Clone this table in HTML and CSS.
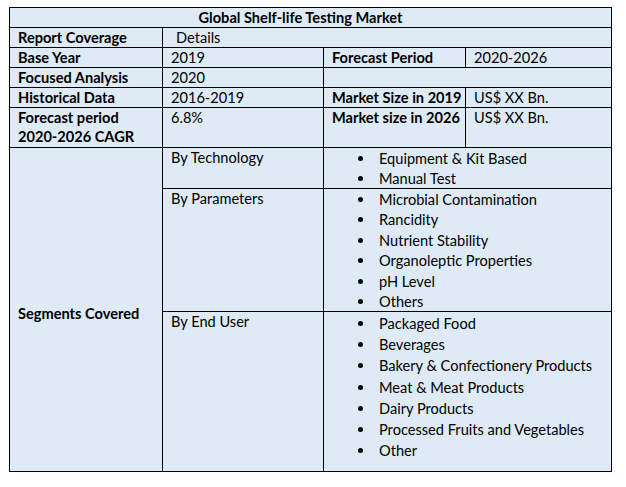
FILE: index.html
```html
<!DOCTYPE html>
<html lang="en">
<head>
<meta charset="utf-8">
<title>Global Shelf-life Testing Market</title>
<link rel="stylesheet" href="styles.css">
</head>
<body>
<table class="report">
  <colgroup>
    <col class="c1"><col class="c2"><col class="c3"><col class="c4">
  </colgroup>
  <tr class="r-title"><td colspan="4" class="title">Global Shelf-life Testing Market</td></tr>
  <tr class="r-std"><td class="lbl">Report Coverage</td><td colspan="3" class="details">Details</td></tr>
  <tr class="r-std"><td class="lbl">Base Year</td><td>2019</td><td class="lbl">Forecast Period</td><td>2020-2026</td></tr>
  <tr class="r-std"><td class="lbl">Focused Analysis</td><td>2020</td><td colspan="2"></td></tr>
  <tr class="r-std"><td class="lbl">Historical Data</td><td>2016-2019</td><td class="lbl">Market Size in 2019</td><td>US$ XX Bn.</td></tr>
  <tr class="r-two"><td class="lbl">Forecast period<br>2020-2026 CAGR</td><td>6.8%</td><td class="lbl">Market size in 2026</td><td>US$ XX Bn.</td></tr>
  <tr class="r-tech">
    <td rowspan="3" class="lbl seg">Segments Covered</td>
    <td>By Technology</td>
    <td colspan="2" class="list-cell">
      <ul class="bullets">
        <li>Equipment &amp; Kit Based</li>
        <li>Manual Test</li>
      </ul>
    </td>
  </tr>
  <tr class="r-param">
    <td>By Parameters</td>
    <td colspan="2" class="list-cell">
      <ul class="bullets">
        <li>Microbial Contamination</li>
        <li>Rancidity</li>
        <li>Nutrient Stability</li>
        <li>Organoleptic Properties</li>
        <li>pH Level</li>
        <li>Others</li>
      </ul>
    </td>
  </tr>
  <tr class="r-user">
    <td>By End User</td>
    <td colspan="2" class="list-cell">
      <ul class="bullets wide">
        <li>Packaged Food</li>
        <li>Beverages</li>
        <li>Bakery &amp; Confectionery Products</li>
        <li>Meat &amp; Meat Products</li>
        <li>Dairy Products</li>
        <li>Processed Fruits and Vegetables</li>
        <li>Other</li>
      </ul>
    </td>
  </tr>
</table>
</body>
</html>
```
FILE: styles.css
```css
html, body {
  margin: 0;
  padding: 0;
  background: #ffffff;
}
body {
  padding: 7px 0 0 9px;
  font-family: Lato, "Open Sans", "Liberation Sans", sans-serif;
  font-size: 14.6px;
  color: #000;
}
.report {
  border-collapse: collapse;
  table-layout: fixed;
  width: 602px;
  background: #deeaf6;
}
.c1 { width: 153px; }
.c2 { width: 161px; }
.c3 { width: 142px; }
.c4 { width: 146px; }
.report td {
  border: 1.3px solid #000;
  vertical-align: top;
  padding: 0 2px 0 8px;
  line-height: 19px;
  white-space: nowrap;
}
.r-title td { height: 19px; }
.r-std td { height: 19px; }
.r-two td { height: 39px; }
.r-tech td { height: 39px; }
.r-param td { height: 121px; }
.r-user td { height: 158px; }
.title {
  text-align: center;
  font-weight: bold;
  padding-right: 28px !important;
}
.lbl { font-weight: bold; }
.details { padding-left: 13px !important; }
.seg {
  vertical-align: middle !important;
  padding-top: 8px !important;
}
.list-cell { padding-left: 0 !important; padding-top: 1px !important; }
.bullets {
  list-style: none;
  margin: 0;
  padding: 0 0 0 34px;
}
.bullets li {
  line-height: 20.4px;
  height: 20.4px;
}
.bullets.wide li { line-height: 21.2px; height: 21.2px; }
.bullets li:last-child { height: 17px; }
.bullets li::before {
  content: "";
  display: inline-block;
  width: 5px;
  height: 5px;
  border-radius: 50%;
  background: #000;
  margin-right: 16px;
  vertical-align: 3px;
}
```
